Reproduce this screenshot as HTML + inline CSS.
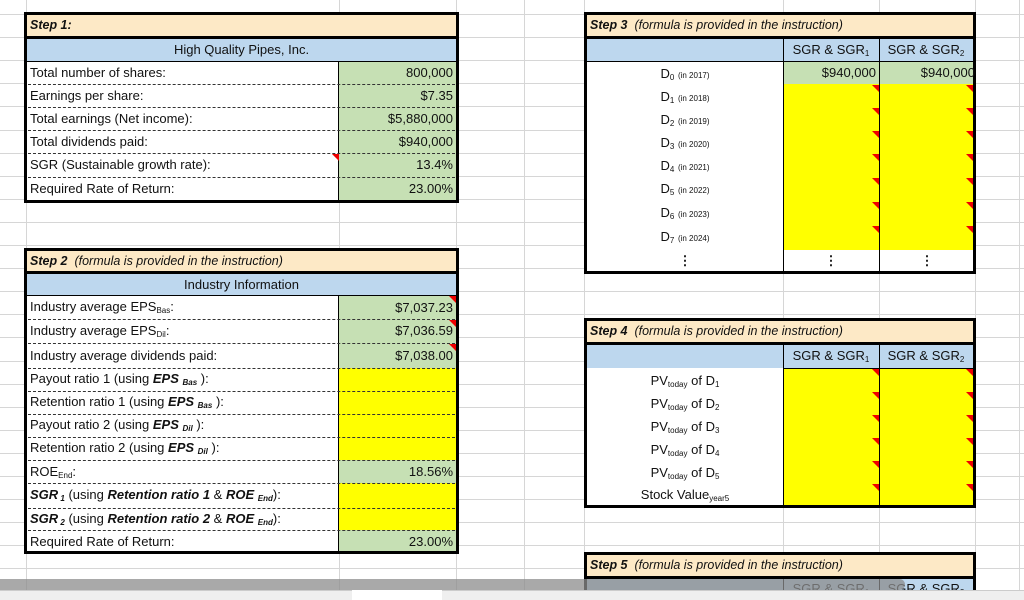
<!DOCTYPE html>
<html><head><meta charset="utf-8"><style>
*{margin:0;padding:0;box-sizing:border-box}
html,body{width:1024px;height:600px;overflow:hidden}
body{background:#fff;position:relative;font-family:"Liberation Sans",sans-serif;font-size:13px;color:#111}
.a{position:absolute}
.gl{position:absolute;background:#d6d6d6}
.c{position:absolute;white-space:nowrap;line-height:22px;padding:0 3px}
.r{text-align:right}
.ctr{text-align:center}
.hd{background:#fde9c6;font-style:italic;font-weight:bold;font-size:12.5px}
.hd i{font-weight:normal}
.bl{background:#bdd7ee}
.gr{background:#c6e0b4}
.ye{background:#ffff00}
.dash{position:absolute;height:0;border-top:1px dashed #333}
.tri{position:absolute;width:0;height:0;border-top:7px solid #e00;border-left:7px solid transparent}
sub{font-size:8px;vertical-align:-2px}
.sm{font-size:8px}
</style></head><body>
<div class="gl" style="left:26px;top:0;width:1px;height:600px"></div>
<div class="gl" style="left:339px;top:0;width:1px;height:600px"></div>
<div class="gl" style="left:456px;top:0;width:1px;height:600px"></div>
<div class="gl" style="left:524px;top:0;width:1px;height:600px"></div>
<div class="gl" style="left:584px;top:0;width:1px;height:600px"></div>
<div class="gl" style="left:783px;top:0;width:1px;height:600px"></div>
<div class="gl" style="left:879px;top:0;width:1px;height:600px"></div>
<div class="gl" style="left:975px;top:0;width:1px;height:600px"></div>
<div class="gl" style="left:1019px;top:0;width:1px;height:600px"></div>
<div id="hl"></div>
<script>
var h='';for(var k=0;k<26;k++){var y=Math.round(14+23.1*k);h+='<div class="gl" style="left:0;top:'+y+'px;width:1024px;height:1px"></div>';}
document.getElementById('hl').innerHTML=h;
</script>

<!-- STEP 1 -->
<div class="a" style="left:24px;top:12px;width:435px;height:191px;background:#fff;border:3px solid #000"></div>
<div class="c hd" style="left:27px;top:15px;width:429px;height:21px;line-height:21px">Step 1:</div>
<div class="a" style="left:27px;top:36px;width:429px;height:3px;background:#000"></div>
<div class="c bl ctr" style="left:27px;top:39px;width:429px;height:22px">High Quality Pipes, Inc.</div>
<div class="a" style="left:27px;top:61px;width:429px;height:1px;background:#000"></div>
<div class="a gr" style="left:339px;top:62px;width:117px;height:138px"></div>
<div class="a" style="left:338px;top:62px;width:1px;height:138px;background:#000"></div>
<div class="c" style="left:27px;top:62px">Total number of shares:</div><div class="c r" style="left:339px;top:62px;width:117px">800,000</div>
<div class="c" style="left:27px;top:85px">Earnings per share:</div><div class="c r" style="left:339px;top:85px;width:117px">$7.35</div>
<div class="c" style="left:27px;top:108px">Total earnings (Net income):</div><div class="c r" style="left:339px;top:108px;width:117px">$5,880,000</div>
<div class="c" style="left:27px;top:131px">Total dividends paid:</div><div class="c r" style="left:339px;top:131px;width:117px">$940,000</div>
<div class="c" style="left:27px;top:154px">SGR (Sustainable growth rate):</div><div class="c r" style="left:339px;top:154px;width:117px">13.4%</div>
<div class="c" style="left:27px;top:178px">Required Rate of Return:</div><div class="c r" style="left:339px;top:178px;width:117px">23.00%</div>
<div class="dash" style="left:28px;top:84px;width:427px"></div>
<div class="dash" style="left:28px;top:107px;width:427px"></div>
<div class="dash" style="left:28px;top:130px;width:427px"></div>
<div class="dash" style="left:28px;top:153px;width:427px"></div>
<div class="dash" style="left:28px;top:177px;width:427px"></div>
<div class="tri" style="left:332px;top:154px"></div>

<!-- STEP 2 -->
<div class="a" style="left:24px;top:248px;width:435px;height:306px;background:#fff;border:3px solid #000"></div>
<div class="c hd" style="left:27px;top:251px;width:429px;height:20px;line-height:21px">Step 2 <i>&nbsp;(formula is provided in the instruction)</i></div>
<div class="a" style="left:27px;top:271px;width:429px;height:3px;background:#000"></div>
<div class="c bl ctr" style="left:27px;top:274px;width:429px;height:21px;line-height:21px">Industry Information</div>
<div class="a" style="left:27px;top:295px;width:429px;height:1px;background:#000"></div>
<div class="a gr" style="left:339px;top:296px;width:117px;height:72px"></div>
<div class="a ye" style="left:339px;top:368px;width:117px;height:92px"></div>
<div class="a gr" style="left:339px;top:460px;width:117px;height:23px"></div>
<div class="a ye" style="left:339px;top:483px;width:117px;height:47px"></div>
<div class="a gr" style="left:339px;top:530px;width:117px;height:21px"></div>
<div class="a" style="left:338px;top:296px;width:1px;height:255px;background:#000"></div>
<div class="c" style="left:27px;top:296px">Industry average EPS<sub>Bas</sub>:</div><div class="c r" style="left:339px;top:297px;width:117px">$7,037.23</div>
<div class="c" style="left:27px;top:320px">Industry average EPS<sub>Dil</sub>:</div><div class="c r" style="left:339px;top:320px;width:117px">$7,036.59</div>
<div class="c" style="left:27px;top:345px">Industry average dividends paid:</div><div class="c r" style="left:339px;top:345px;width:117px">$7,038.00</div>
<div class="c" style="left:27px;top:368px">Payout ratio 1 (using <b><i>EPS <sub>Bas</sub></i></b> ):</div>
<div class="c" style="left:27px;top:391px">Retention ratio 1 (using <b><i>EPS <sub>Bas</sub></i></b> ):</div>
<div class="c" style="left:27px;top:414px">Payout ratio 2 (using <b><i>EPS <sub>Dil</sub></i></b> ):</div>
<div class="c" style="left:27px;top:437px">Retention ratio 2 (using <b><i>EPS <sub>Dil</sub></i></b> ):</div>
<div class="c" style="left:27px;top:461px">ROE<sub>End</sub>:</div><div class="c r" style="left:339px;top:461px;width:117px">18.56%</div>
<div class="c" style="left:27px;top:484px"><b><i>SGR<sub> 1</sub></i></b> (using <b><i>Retention ratio 1</i></b> &amp; <b><i>ROE <sub>End</sub></i></b>):</div>
<div class="c" style="left:27px;top:508px"><b><i>SGR<sub> 2</sub></i></b> (using <b><i>Retention ratio 2</i></b> &amp; <b><i>ROE <sub>End</sub></i></b>):</div>
<div class="c" style="left:27px;top:531px">Required Rate of Return:</div><div class="c r" style="left:339px;top:531px;width:117px">23.00%</div>
<div class="dash" style="left:28px;top:319px;width:427px"></div>
<div class="dash" style="left:28px;top:343px;width:427px"></div>
<div class="dash" style="left:28px;top:368px;width:427px"></div>
<div class="dash" style="left:28px;top:391px;width:427px"></div>
<div class="dash" style="left:28px;top:414px;width:427px"></div>
<div class="dash" style="left:28px;top:437px;width:427px"></div>
<div class="dash" style="left:28px;top:460px;width:427px"></div>
<div class="dash" style="left:28px;top:483px;width:427px"></div>
<div class="dash" style="left:28px;top:508px;width:427px"></div>
<div class="dash" style="left:28px;top:530px;width:427px"></div>
<div class="tri" style="left:449px;top:296px"></div>
<div class="tri" style="left:449px;top:320px"></div>
<div class="tri" style="left:449px;top:344px"></div>

<!-- STEP 3 -->
<div class="a" style="left:584px;top:12px;width:392px;height:262px;background:#fff;border:3px solid #000"></div>
<div class="c hd" style="left:587px;top:15px;width:386px;height:21px;line-height:21px">Step 3 <i>&nbsp;(formula is provided in the instruction)</i></div>
<div class="a" style="left:587px;top:36px;width:386px;height:3px;background:#000"></div>
<div class="a bl" style="left:587px;top:39px;width:386px;height:22px"></div>
<div class="c ctr" style="left:783px;top:39px;width:96px">SGR &amp; SGR<sub>1</sub></div>
<div class="c ctr" style="left:879px;top:39px;width:94px">SGR &amp; SGR<sub>2</sub></div>
<div class="a" style="left:587px;top:61px;width:386px;height:1px;background:#000"></div>
<div class="a gr" style="left:784px;top:62px;width:189px;height:22px"></div>
<div class="a ye" style="left:784px;top:84px;width:189px;height:166px"></div>
<div class="a" style="left:783px;top:39px;width:1px;height:232px;background:#000"></div>
<div class="a" style="left:879px;top:39px;width:1px;height:232px;background:#000"></div>
<div class="c r" style="left:783px;top:62px;width:96px">$940,000</div>
<div class="c r" style="left:879px;top:62px;width:97px;padding-right:1px">$940,000</div>
<div class="c ctr" style="left:587px;top:63px;width:196px">D<sub>0</sub> <span class="sm">(in 2017)</span></div>
<div class="c ctr" style="left:587px;top:86px;width:196px">D<sub>1</sub> <span class="sm">(in 2018)</span></div>
<div class="c ctr" style="left:587px;top:109px;width:196px">D<sub>2</sub> <span class="sm">(in 2019)</span></div>
<div class="c ctr" style="left:587px;top:132px;width:196px">D<sub>3</sub> <span class="sm">(in 2020)</span></div>
<div class="c ctr" style="left:587px;top:155px;width:196px">D<sub>4</sub> <span class="sm">(in 2021)</span></div>
<div class="c ctr" style="left:587px;top:178px;width:196px">D<sub>5</sub> <span class="sm">(in 2022)</span></div>
<div class="c ctr" style="left:587px;top:202px;width:196px">D<sub>6</sub> <span class="sm">(in 2023)</span></div>
<div class="c ctr" style="left:587px;top:226px;width:196px">D<sub>7</sub> <span class="sm">(in 2024)</span></div>
<div class="c ctr" style="left:587px;top:250px;width:196px;font-weight:bold">⋮</div>
<div class="c ctr" style="left:783px;top:250px;width:96px;font-weight:bold">⋮</div>
<div class="c ctr" style="left:879px;top:250px;width:96px;font-weight:bold">⋮</div>
<div class="tri" style="left:872px;top:85px"></div><div class="tri" style="left:966px;top:85px"></div>
<div class="tri" style="left:872px;top:108px"></div><div class="tri" style="left:966px;top:108px"></div>
<div class="tri" style="left:872px;top:131px"></div><div class="tri" style="left:966px;top:131px"></div>
<div class="tri" style="left:872px;top:154px"></div><div class="tri" style="left:966px;top:154px"></div>
<div class="tri" style="left:872px;top:178px"></div><div class="tri" style="left:966px;top:178px"></div>
<div class="tri" style="left:872px;top:202px"></div><div class="tri" style="left:966px;top:202px"></div>
<div class="tri" style="left:872px;top:226px"></div><div class="tri" style="left:966px;top:226px"></div>

<!-- STEP 4 -->
<div class="a" style="left:584px;top:318px;width:392px;height:190px;background:#fff;border:3px solid #000"></div>
<div class="c hd" style="left:587px;top:321px;width:386px;height:21px;line-height:21px">Step 4 <i>&nbsp;(formula is provided in the instruction)</i></div>
<div class="a" style="left:587px;top:342px;width:386px;height:3px;background:#000"></div>
<div class="a bl" style="left:587px;top:345px;width:386px;height:23px"></div>
<div class="c ctr" style="left:783px;top:345px;width:96px">SGR &amp; SGR<sub>1</sub></div>
<div class="c ctr" style="left:879px;top:345px;width:94px">SGR &amp; SGR<sub>2</sub></div>
<div class="a ye" style="left:784px;top:368px;width:189px;height:137px"></div>
<div class="a" style="left:783px;top:345px;width:1px;height:160px;background:#000"></div>
<div class="a" style="left:879px;top:345px;width:1px;height:160px;background:#000"></div>
<div class="a" style="left:783px;top:368px;width:190px;height:1px;background:#000"></div>
<div class="c ctr" style="left:587px;top:370px;width:196px">PV<sub>today</sub> of D<sub>1</sub></div>
<div class="c ctr" style="left:587px;top:393px;width:196px">PV<sub>today</sub> of D<sub>2</sub></div>
<div class="c ctr" style="left:587px;top:416px;width:196px">PV<sub>today</sub> of D<sub>3</sub></div>
<div class="c ctr" style="left:587px;top:439px;width:196px">PV<sub>today</sub> of D<sub>4</sub></div>
<div class="c ctr" style="left:587px;top:462px;width:196px">PV<sub>today</sub> of D<sub>5</sub></div>
<div class="c ctr" style="left:587px;top:484px;width:196px">Stock Value<sub>year5</sub></div>
<div class="tri" style="left:872px;top:369px"></div><div class="tri" style="left:966px;top:369px"></div>
<div class="tri" style="left:872px;top:392px"></div><div class="tri" style="left:966px;top:392px"></div>
<div class="tri" style="left:872px;top:415px"></div><div class="tri" style="left:966px;top:415px"></div>
<div class="tri" style="left:872px;top:438px"></div><div class="tri" style="left:966px;top:438px"></div>
<div class="tri" style="left:872px;top:461px"></div><div class="tri" style="left:966px;top:461px"></div>
<div class="tri" style="left:872px;top:484px"></div><div class="tri" style="left:966px;top:484px"></div>

<!-- STEP 5 -->
<div class="a" style="left:584px;top:552px;width:392px;height:48px;background:#fff;border:3px solid #000;border-bottom:none"></div>
<div class="c hd" style="left:587px;top:555px;width:386px;height:21px;line-height:21px">Step 5 <i>&nbsp;(formula is provided in the instruction)</i></div>
<div class="a" style="left:587px;top:576px;width:386px;height:3px;background:#000"></div>
<div class="a bl" style="left:587px;top:579px;width:386px;height:21px"></div>
<div class="a" style="left:783px;top:579px;width:1px;height:21px;background:#000"></div>
<div class="a" style="left:879px;top:579px;width:1px;height:21px;background:#000"></div>
<div class="c ctr" style="left:783px;top:578px;width:96px">SGR &amp; SGR<sub>1</sub></div>
<div class="c ctr" style="left:879px;top:578px;width:94px">SGR &amp; SGR<sub>2</sub></div>

<!-- scrollbar / tabs -->
<div class="a" style="left:0;top:579px;width:905px;height:11px;background:rgba(140,140,140,0.75);border-radius:0 6px 6px 0"></div>
<div class="a" style="left:0;top:590px;width:1024px;height:10px;background:#efefef;border-top:1px solid #ccc"></div>
<div class="a" style="left:352px;top:590px;width:90px;height:10px;background:#fff"></div>
</body></html>
